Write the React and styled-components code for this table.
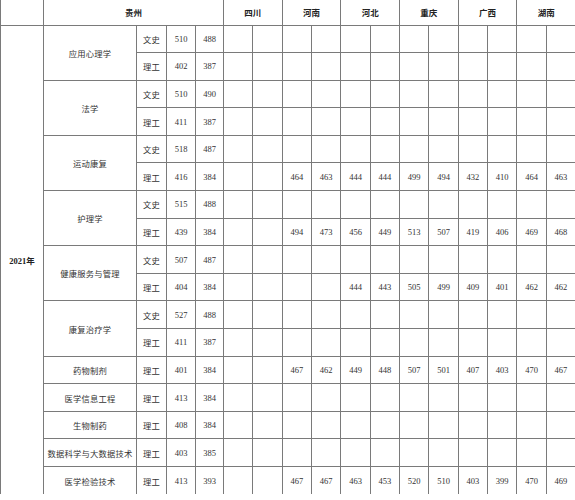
import React from 'react';
import styled, { createGlobalStyle } from 'styled-components';

const GlobalStyle = createGlobalStyle`
    html, body {
        margin: 0;
        padding: 0;
        background: #fff;
    }
    body {
        font-family: "Liberation Serif", "Noto Sans CJK SC", serif;
        color: #333;
    }
`

const provinces = ['四川', '河南', '河北', '重庆', '广西', '湖南'];

// each major: name, rows of [科类, 最高, 最低, ...12 province cells]
const majors = [
    { name: '应用心理学', rows: [['文史', 510, 488], ['理工', 402, 387]] },
    { name: '法学', rows: [['文史', 510, 490], ['理工', 411, 387]] },
    { name: '运动康复', rows: [['文史', 518, 487], ['理工', 416, 384, '', '', 464, 463, 444, 444, 499, 494, 432, 410, 464, 463]] },
    { name: '护理学', rows: [['文史', 515, 488], ['理工', 439, 384, '', '', 494, 473, 456, 449, 513, 507, 419, 406, 469, 468]] },
    { name: '健康服务与管理', rows: [['文史', 507, 487], ['理工', 404, 384, '', '', '', '', 444, 443, 505, 499, 409, 401, 462, 462]] },
    { name: '康复治疗学', rows: [['文史', 527, 488], ['理工', 411, 387]] },
    { name: '药物制剂', rows: [['理工', 401, 384, '', '', 467, 462, 449, 448, 507, 501, 407, 403, 470, 467]] },
    { name: '医学信息工程', rows: [['理工', 413, 384]] },
    { name: '生物制药', rows: [['理工', 408, 384]] },
    { name: '数据科学与大数据技术', rows: [['理工', 403, 385]] },
    { name: '医学检验技术', rows: [['理工', 413, 393, '', '', 467, 467, 463, 453, 520, 510, 403, 399, 470, 469]] },
];

const totalRows = majors.reduce((n, m) => n + m.rows.length, 0);

function App() {
    return (
        <>
            <GlobalStyle />
            <Table>
                <colgroup>
                    <col style={{ width: 43 }} />
                    <col style={{ width: 93 }} />
                    <col style={{ width: 30 }} />
                    <col style={{ width: 29 }} />
                    <col style={{ width: 28 }} />
                    {Array.from({ length: 12 }).map((_, i) => (
                        <col key={i} style={{ width: 29.33 }} />
                    ))}
                </colgroup>
                <thead>
                    <HeadRow>
                        <HeadCell />
                        <HeadCell colSpan={4}>贵州</HeadCell>
                        {provinces.map(p => (
                            <HeadCell key={p} colSpan={2}>{p}</HeadCell>
                        ))}
                    </HeadRow>
                </thead>
                <tbody>
                    {majors.map((m, mi) =>
                        m.rows.map((r, ri) => {
                            const cells = [];
                            for (let i = 3; i < 15; i++) cells.push(r[i] ?? '');
                            const isLast = mi === majors.length - 1;
                            return (
                                <Row key={`${mi}-${ri}`} $last={isLast}>
                                    {mi === 0 && ri === 0 && (
                                        <YearCell rowSpan={totalRows}>2021年</YearCell>
                                    )}
                                    {ri === 0 && (
                                        <Cell rowSpan={m.rows.length} $cn>{m.name}</Cell>
                                    )}
                                    <Cell $cn>{r[0]}</Cell>
                                    <Cell>{r[1]}</Cell>
                                    <Cell>{r[2]}</Cell>
                                    {cells.map((c, ci) => (
                                        <Cell key={ci}>{c}</Cell>
                                    ))}
                                </Row>
                            );
                        })
                    )}
                </tbody>
            </Table>
        </>
    )
}

const Table = styled.table`
    width: 575px;
    table-layout: fixed;
    border-collapse: collapse;
    border-spacing: 0;
`

const HeadRow = styled.tr`
    height: 25px;
`

const HeadCell = styled.th`
    border: 1px solid #7a7a7a;
    border-top: none;
    padding: 0;
    font-size: 8.5px;
    font-weight: bold;
    color: #222;
    text-align: center;
    vertical-align: middle;
    font-family: "Noto Sans CJK SC", serif;
`

const Row = styled.tr`
    height: 27.6px;

    td {
        border-bottom: ${p => p.$last ? 'none' : '1px solid #7a7a7a'};
    }
`

const Cell = styled.td`
    border: 1px solid #7a7a7a;
    padding: 0;
    text-align: center;
    vertical-align: middle;
    white-space: nowrap;
    overflow: hidden;
    font-size: ${p => p.$cn ? '8.3px' : '8.5px'};
    letter-spacing: ${p => p.$cn ? '0.2px' : '0'};
    color: #333;
`

const YearCell = styled.td`
    border: 1px solid #7a7a7a;
    border-bottom: none !important;
    padding: 0;
    text-align: center;
    vertical-align: middle;
    font-size: 8.5px;
    font-weight: bold;
    color: #222;
`

export default App;
